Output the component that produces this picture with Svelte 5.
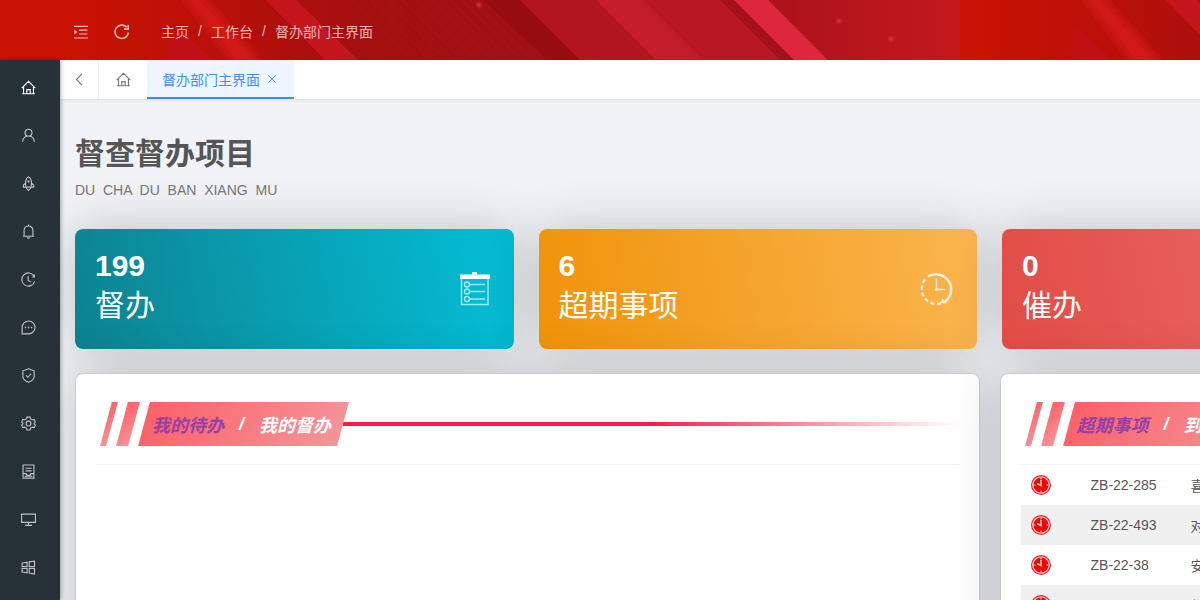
<script>
  const menu = [
    { label: '主页', icon: 'home' },
    { label: '用户', icon: 'user' },
    { label: '发布', icon: 'rocket' },
    { label: '通知', icon: 'bell' },
    { label: '历史', icon: 'history' },
    { label: '消息', icon: 'message' },
    { label: '安全', icon: 'shield' },
    { label: '设置', icon: 'gear' },
    { label: '文档', icon: 'file' },
    { label: '监控', icon: 'monitor' },
    { label: '应用', icon: 'windows' },
  ];

  const crumbs = ['主页', '工作台', '督办部门主界面'];

  const cards = [
    { value: 199, label: '督办', tone: 'teal', icon: 'list' },
    { value: 6, label: '超期事项', tone: 'orange', icon: 'clock' },
    { value: 0, label: '催办', tone: 'red', icon: '' },
  ];

  const rows = [
    { code: 'ZB-22-285', title: '喜' },
    { code: 'ZB-22-493', title: '对' },
    { code: 'ZB-22-38', title: '安' },
    { code: 'ZB-22-41', title: '关' },
  ];

  const panels = [
    { tabs: ['我的待办', '我的督办'], rows: [] },
    { tabs: ['超期事项', '到期事项'], rows },
  ];

  // left ends of the thin diagonal lines in the banner
  const hatch = [293, 311, 327, 342, 357, 373, 390, 402, 413];

  let activeMenu = $state(0);
  let activeTabs = $state([0, 0]);
</script>

{#snippet icon(name)}
  <svg class="icon" viewBox="0 0 16 16" aria-hidden="true">
    {#if name === 'home'}
      <path d="M.8 8.6 8 1.4l7.2 7.2M2.7 7.2v7.4h10.6V7.2M1.2 14.6h13.6M6.2 14.4v-4.2h3.6v4.2" />
    {:else if name === 'user'}
      <circle cx="8" cy="5" r="3.7" />
      <path d="M1.8 14.6c.2-3.4 2.4-5.4 4.6-6.1M14.2 14.6c-.2-3.4-2.4-5.4-4.6-6.1" />
    {:else if name === 'rocket'}
      <path d="M5 11V5.2C5.2 3.2 6.5 1.8 8 .9c1.5.9 2.8 2.3 3 4.3V11M5 7.5 2.5 9.700v2.100h11V9.700L11 7.500M5.600 12c.2 1.600 1.200 2.500 2.400 3.200 1.200-.7 2.200-1.600 2.400-3.200" />
      <circle cx="8" cy="5.8" r=".6" />
    {:else if name === 'bell'}
      <path d="M3.3 13V6.8a4.7 4.7 0 0 1 9.4 0V13M2.2 13.1h11.6M8 2V.6M6.6 14.2c.3 1.3 2.5 1.3 2.8 0" />
    {:else if name === 'history'}
      <path d="M14 4.6A7 7 0 1 0 14.6 10M14.3 2.6v2.700h-2.600M7.600 4.200V9l3.200 1.800" />
    {:else if name === 'message'}
      <path d="M1.2 14.8V8A6.9 6.9 0 1 1 8 14.8z" />
      <path class="thick" d="M4 8h1.500M7.300 8h1.500M10.600 8h1.500" />
    {:else if name === 'shield'}
      <path d="M8 .9 14 3v6.2c0 2.5-2.6 4.5-6 6-3.4-1.5-6-3.500-6-6V3z" />
      <path d="m5.3 7.9 2 2 3.5-3.8" />
    {:else if name === 'gear'}
      <path d="m6.3 1.2-.5 1.9-1.9 1.1L2 3.7.7 6.500l1.400 1.400v.4L.7 9.700 2 12.400l2-.5 1.800 1 .5 2h3.400l.5-2 1.900-1 1.900.5 1.300-2.700-1.400-1.400v-.4l1.400-1.400L14 3.700l-1.900.5-1.900-1.100-.5-1.900z" />
      <circle cx="8" cy="8" r="2.6" />
    {:else if name === 'file'}
      <path d="M2.2 1h11.6v14H2.2zM4.7 4.5h6.6M4.7 7.3h6.6M2.2 10.3h3.2c.4 2.6 4.8 2.6 5.2 0h3.2M4 13h8" />
    {:else if name === 'monitor'}
      <path d="M.6 2.2h14.8v8.9H.6zM8 11.1v3M4.2 14.2h7.6" />
    {:else if name === 'windows'}
      <path d="M1.2 3.2 6.5 2.4v4.7H1.2zM8.7 2l5.7-.8v5.9H8.7zM1.2 9h5.300v4.700l-5.300-.8zM8.700 9h5.700v5.900l-5.700-.9z" />
    {:else if name === 'back'}
      <path d="M10.5 2 4.8 8l5.7 6" />
    {:else if name === 'close'}
      <path d="m3 3 10 10M13 3 3 13" />
    {:else if name === 'indent'}
      <path d="M1 2.3h14M6 6.2h8.500M6 10h8.500M1 14h14" />
      <path class="solid" d="M1.2 5.8 4.5 8.1 1.2 10.4z" />
    {:else if name === 'refresh'}
      <path class="thick" d="M14.4 8.6A6.7 6.7 0 1 1 12.6 3.2M14.2.8v4.3H9.9" />
    {/if}
  </svg>
{/snippet}

<div class="layout">
  <header>
    <div class="logo"></div>
    <div class="banner">
      <svg class="art" aria-hidden="true">
        <defs>
          <linearGradient id="base">
            <stop offset="0" stop-color="#c91203" />
            <stop offset=".09" stop-color="#c21106" />
            <stop offset=".2" stop-color="#b5100a" />
            <stop offset=".32" stop-color="#a60f0f" />
            <stop offset=".5" stop-color="#a01015" />
          </linearGradient>
          <linearGradient id="tail">
            <stop offset="0" stop-color="#ab121b" />
            <stop offset="1" stop-color="#c4191d" />
          </linearGradient>
          <filter id="soft" x="-50%" y="-50%" width="200%" height="200%">
            <feGaussianBlur stdDeviation="5" />
          </filter>
          <radialGradient id="spark">
            <stop offset="0" stop-color="#df3a42" stop-opacity=".8" />
            <stop offset="1" stop-color="#df3a42" stop-opacity="0" />
          </radialGradient>
          <pattern id="tile" width="900" height="60" patternUnits="userSpaceOnUse">
            <rect width="900" height="60" fill="url(#base)" />
            <path d="M110-20h18l88 100h-30z" fill="#dc1a1d" opacity=".75" filter="url(#soft)" />
            <path d="M117 27 108 60h44z" fill="#c21018" opacity=".8" />
            <path d="M206 0h30l62 60h-33z" fill="#c5161d" />
            {#each hatch as x}
              <path d="M{x} 0l60 60" stroke="#ba1a20" opacity=".35" />
            {/each}
            <path d="M423 0h37l60 60h-33z" fill="#960c11" />
            <path d="M460 0h77l60 60h-77z" fill="#b31520" />
            <path d="M536 0h47l60 60h-47z" fill="#c31c2b" />
            <path d="M583 0h78l60 60h-78z" fill="#b81724" />
            <path d="M660 0h15l60 60h-15z" fill="#a4111a" />
            <path d="M708 0h192v60H768z" fill="url(#tail)" />
            <path d="M674 0h34l60 60h-34z" fill="#de263d" />
            <circle cx="419" cy="5" r="4" fill="url(#spark)" />
            <circle cx="779" cy="21" r="4" fill="url(#spark)" />
            <circle cx="831" cy="39" r="4" fill="url(#spark)" />
          </pattern>
        </defs>
        <rect width="100%" height="60" fill="url(#tile)" />
      </svg>
      <button class="tool" aria-label="收起菜单">{@render icon('indent')}</button>
      <button class="tool" aria-label="刷新">{@render icon('refresh')}</button>
      <nav class="crumbs">
        {#each crumbs as crumb, i}
          {#if i > 0}<span class="slash">/</span>{/if}
          <a href="#{i}">{crumb}</a>
        {/each}
      </nav>
    </div>
  </header>

  <aside>
    {#each menu as item, i}
      <button
        class:active={i === activeMenu}
        aria-label={item.label}
        onclick={() => (activeMenu = i)}
      >
        {@render icon(item.icon)}
      </button>
    {/each}
  </aside>

  <div class="body">
    <div class="tabbar">
      <button class="back" aria-label="后退">{@render icon('back')}</button>
      <button class="home" aria-label="主页">{@render icon('home')}</button>
      <div class="tab">
        <a href="#current">督办部门主界面</a>
        <button aria-label="关闭">{@render icon('close')}</button>
      </div>
    </div>

    <main>
      <h1>督查督办项目</h1>
      <p class="pinyin">DU  CHA  DU  BAN  XIANG  MU</p>

      <div class="cards">
        {#each cards as card}
          <div class="card {card.tone}">
            <div class="stat">
              <strong>{card.value}</strong>
              <span>{card.label}</span>
            </div>
            {#if card.icon === 'list'}
              <svg width="32" height="36" viewBox="0 0 32 36" aria-hidden="true">
                <path d="M1 3.5h12V1h5v2.500h13V8H1z" fill="#fff" />
                <rect x="14" y="3" width="3" height="2" fill="#d8f5f8" />
                <g fill="none" stroke="#a4e8ef" stroke-width="1.4">
                  <path d="M2.5 8v25.5h26.500V8M11 13.500h15M11 20.500h15M11 28h15" />
                  <circle cx="8" cy="13.5" r="2.5" />
                  <circle cx="8" cy="20.5" r="2.5" />
                  <circle cx="8" cy="28" r="2.5" />
                </g>
              </svg>
            {:else if card.icon === 'clock'}
              <svg width="34" height="34" viewBox="0 0 34 34" aria-hidden="true">
                <g fill="none" stroke="#f3ede3">
                  <path d="M8 4.6A15 15 0 1 1 24 30.3" stroke-width="2.4" />
                  <path d="M21 31.4A15 15 0 0 1 6.5 6" stroke-width="2.4" stroke-dasharray="4 2.8" />
                  <path d="M16.5 6.5v11H25" stroke-width="1.4" />
                </g>
                <path d="m20 31 2.5-4.5 4.5 5z" fill="#f3ede3" />
                <circle cx="16.5" cy="17.5" r="1.6" fill="#f3ede3" />
              </svg>
            {/if}
          </div>
        {/each}
      </div>

      <div class="panels">
        {#each panels as panel, p}
          <section>
            <div class="panel-head">
              <i class="bar"></i>
              <i class="bar wide"></i>
              <div class="ribbon">
                {#each panel.tabs as tab, i}
                  {#if i > 0}<span>/</span>{/if}
                  <button
                    class:current={activeTabs[p] === i}
                    onclick={() => (activeTabs[p] = i)}
                  >{tab}</button>
                {/each}
              </div>
              <i class="line"></i>
            </div>
            {#if panel.rows.length}
              <table>
                <tbody>
                  {#each panel.rows as row}
                    <tr>
                      <td class="mark">
                        <svg width="20" height="20" viewBox="0 0 20 20" aria-hidden="true">
                          <circle cx="10" cy="10" r="10" fill="#f41c22" />
                          <circle cx="10" cy="10" r="8.2" fill="#f00" stroke="#ffc9c9" stroke-width="1.3" />
                          <path d="M10 2.5v2M10 15.5v2M2.5 10h2M15.5 10h2" stroke="#ffc9c9" stroke-width="1.2" />
                          <path d="M10 5v5.5L6 8.500" fill="none" stroke="#ffdcdc" stroke-width="1.5" />
                        </svg>
                      </td>
                      <td class="code">{row.code}</td>
                      <td>{row.title}</td>
                    </tr>
                  {/each}
                </tbody>
              </table>
            {/if}
          </section>
        {/each}
      </div>
    </main>
  </div>
</div>

<style>
  :global(body) {
    background: #f0f2f5;
    overflow: hidden;
  }

  .layout {
    display: grid;
    grid-template: 60px 1fr / 60px minmax(0, 1fr);
    height: 100vh;
    font-family: 'Liberation Sans', 'Noto Sans CJK SC', sans-serif;
    font-size: 14px;
    color: #555;
  }

  button {
    display: flex;
    align-items: center;
    justify-content: center;
    padding: 0;
    border: 0;
    background: none;
    color: inherit;
    font: inherit;
    cursor: pointer;
  }

  a {
    color: inherit;
    text-decoration: none;
  }

  .icon {
    width: 16px;
    height: 16px;
    fill: none;
    stroke: currentColor;
    stroke-width: 1.2;
  }

  .icon .solid {
    fill: currentColor;
    stroke: none;
  }

  .icon .thick {
    stroke-width: 1.6;
  }

  header {
    grid-column: 1 / -1;
    display: flex;
    color: rgba(255, 255, 255, 0.7);
  }

  .logo {
    width: 60px;
    background: #c91203;
  }

  .banner {
    position: relative;
    flex: 1;
    display: flex;
    align-items: center;
    overflow: hidden;
  }

  .art {
    position: absolute;
    inset: 0;
    width: 100%;
    height: 60px;
  }

  .tool {
    position: relative;
    width: 41px;
    height: 60px;
    padding-top: 3px;
  }

  .crumbs {
    position: relative;
    display: flex;
    align-items: center;
    margin-left: 19px;
    padding-top: 2px;
  }

  .slash {
    width: 22px;
    text-align: center;
  }

  aside {
    z-index: 2;
    background: #263238;
    color: rgba(255, 255, 255, 0.7);
    box-shadow: 1px 0 4px rgba(0, 21, 41, 0.35);
    padding-top: 3px;
    overflow: hidden;
  }

  aside button {
    width: 57px;
    height: 48px;
  }

  aside .icon {
    width: 15px;
    height: 15px;
  }

  aside .active {
    color: #fff;
  }

  .body {
    display: flex;
    flex-direction: column;
    min-height: 0;
  }

  .tabbar {
    z-index: 1;
    display: flex;
    flex: none;
    height: 39px;
    background: #fff;
    border-bottom: 1px solid #e2e3e5;
    box-shadow: 0 1px 2px rgba(0, 0, 0, 0.04);
    color: #777;
  }

  .tabbar .icon {
    width: 15px;
    height: 15px;
  }

  .back {
    width: 39px;
    border-right: 1px solid #f0f0f0;
  }

  .home {
    width: 48px;
  }

  .tab {
    display: flex;
    align-items: center;
    gap: 6px;
    padding: 1px 16px 0 15px;
    background: #eef5fe;
    border-bottom: 2px solid #3a8df5;
    color: #3f8ff5;
  }

  .tab .icon {
    width: 12px;
    height: 12px;
  }

  main {
    flex: 1;
    min-height: 0;
    padding: 34px 0 0 15px;
    overflow: hidden;
  }

  h1 {
    margin: 0;
    font-size: 30px;
    line-height: 40px;
    color: #555;
  }

  .pinyin {
    margin: 6px 0 29px;
    line-height: 20px;
    color: #777;
    white-space: pre;
  }

  .cards {
    display: grid;
    grid-template-columns: repeat(3, 38.98%);
    gap: 25px;
  }

  .card {
    display: flex;
    align-items: center;
    justify-content: space-between;
    height: 120px;
    padding: 0 23px 0 20px;
    box-sizing: border-box;
    border-radius: 8px;
    color: #fff;
    font-size: 30px;
    line-height: 40px;
    box-shadow: 0 0 50px rgba(0, 0, 0, 0.2);
  }

  .stat {
    padding-bottom: 6px;
  }

  .stat strong,
  .stat span {
    display: block;
  }

  .teal {
    background: linear-gradient(80deg, #0d8290, #04b9d0 90%);
  }

  .orange {
    background: linear-gradient(80deg, #f0930a, #fab54f);
  }

  .red {
    background: linear-gradient(80deg, #e24c46, #ec7273);
  }

  .panels {
    display: grid;
    grid-template-columns: repeat(2, 80.4%);
    gap: 20px;
    margin-top: 24px;
  }

  section {
    min-height: 400px;
    padding: 0 20px;
    box-sizing: border-box;
    background: #fff;
    border: 1px solid #c9cacd;
    border-radius: 8px;
    box-shadow: 0 0 50px rgba(0, 0, 0, 0.2);
  }

  .panel-head {
    display: flex;
    align-items: center;
    height: 62px;
    padding: 19px 0 9px 10px;
    border-bottom: 1px solid #f3f3f3;
  }

  .bar {
    width: 6px;
    height: 44px;
    margin-right: 10px;
    background: linear-gradient(135deg, #fc6068, #f39599);
    transform: skewX(-15deg);
  }

  .wide {
    width: 12px;
  }

  .ribbon {
    position: relative;
    display: flex;
    align-items: center;
    height: 44px;
    padding: 0 12px 0 8px;
    color: #fff;
    font-size: 18px;
    font-weight: bold;
    font-style: italic;
  }

  .ribbon::before {
    content: '';
    position: absolute;
    inset: 0;
    background: linear-gradient(110deg, #fc6068, #f39599);
    transform: skewX(-15deg);
  }

  .ribbon button,
  .ribbon span {
    position: relative;
  }

  .ribbon span {
    width: 35px;
    text-align: center;
  }

  .ribbon .current {
    color: #953fa8;
  }

  .line {
    flex: 1;
    height: 4px;
    background: linear-gradient(90deg, #fb1c45 50%, rgba(251, 28, 69, 0));
  }

  table {
    width: 100%;
    border-collapse: collapse;
  }

  tr {
    height: 40px;
  }

  tr:nth-child(even) {
    background: #f0f0f0;
  }

  td {
    padding: 0 10px;
  }

  .mark {
    width: 40px;
  }

  .mark svg {
    display: block;
  }

  .code {
    width: 80px;
  }
</style>
